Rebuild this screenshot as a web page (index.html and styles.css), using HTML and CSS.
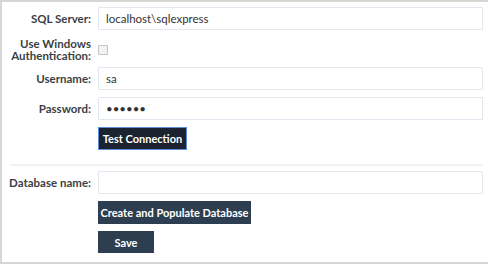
FILE: index.html
```html
<!DOCTYPE html>
<html lang="en">
<head>
<meta charset="utf-8">
<title>Database Setup</title>
<link rel="stylesheet" href="styles.css">
</head>
<body>
<div class="panel">
  <div class="row">
    <label class="lbl">SQL Server:</label>
    <input class="field" type="text" value="localhost\sqlexpress">
  </div>
  <div class="row row-check">
    <label class="lbl lbl-two">Use Windows<br>Authentication:</label>
    <input class="check" type="checkbox">
  </div>
  <div class="row">
    <label class="lbl">Username:</label>
    <input class="field" type="text" value="sa">
  </div>
  <div class="row">
    <label class="lbl">Password:</label>
    <input class="field" type="password" value="secret">
  </div>
  <div class="row row-btn">
    <span></span>
    <div><button class="btn btn-focus">Test Connection</button></div>
  </div>
  <hr class="sep">
  <div class="row">
    <label class="lbl">Database name:</label>
    <input class="field" type="text" value="">
  </div>
  <div class="row row-btn">
    <span></span>
    <div><button class="btn btn-wide">Create and Populate Database</button></div>
  </div>
  <div class="row row-btn">
    <span></span>
    <div><button class="btn btn-save">Save</button></div>
  </div>
</div>
</body>
</html>
```

FILE: styles.css
```css
html, body {
  margin: 0;
  padding: 0;
  background: #fff;
}

body {
  font-family: Lato, "Liberation Sans", sans-serif;
  font-size: 11px;
  color: #333;
}

.panel {
  box-sizing: border-box;
  height: 264px;
  border-top: 2px solid #d6d6d6;
  border-left: 2px solid #d6d6d6;
  border-bottom: 2px solid #d6d6d6;
  padding: 5px 5px 0 0;
  display: flex;
  flex-direction: column;
}

.row {
  display: grid;
  grid-template-columns: 89px 1fr;
  column-gap: 7px;
  align-items: center;
  margin-bottom: 7px;
}

.row-check {
  height: 21px;
  margin-top: 1px;
  margin-bottom: 8px;
}

.lbl {
  text-align: right;
  font-size: 11.5px;
  font-weight: 700;
  color: #3a3f45;
  white-space: nowrap;
}

.lbl-two {
  line-height: 12px;
}

.field {
  box-sizing: border-box;
  height: 23px;
  width: 100%;
  margin: 0;
  padding: 0 7px;
  border: 1px solid #e1e7ee;
  border-radius: 1px;
  font-family: inherit;
  font-size: 11.5px;
  color: #333;
  background: #fff;
  outline: none;
}

.check {
  -webkit-appearance: none;
  appearance: none;
  width: 10px;
  height: 10px;
  margin: 0;
  border: 1px solid #c4c4c4;
  border-radius: 1px;
  background: #f3f3f3;
}

.btn {
  box-sizing: border-box;
  height: 23px;
  margin: 0;
  padding: 0;
  border: 1px solid #2c3e50;
  border-radius: 0;
  background: #2c3e50;
  color: #fff;
  font-family: inherit;
  font-size: 11px;
  font-weight: 700;
  text-align: center;
  white-space: nowrap;
}

.btn-focus {
  width: 89px;
  background: #1b2331;
  border-color: #5d8fd8;
}

.btn-wide {
  width: 153px;
}

.btn-save {
  width: 56px;
  height: 22px;
}

.sep {
  margin: 7px 0 5px 9px;
  height: 2px;
  border: none;
  background: #f2f2f2;
}
```
